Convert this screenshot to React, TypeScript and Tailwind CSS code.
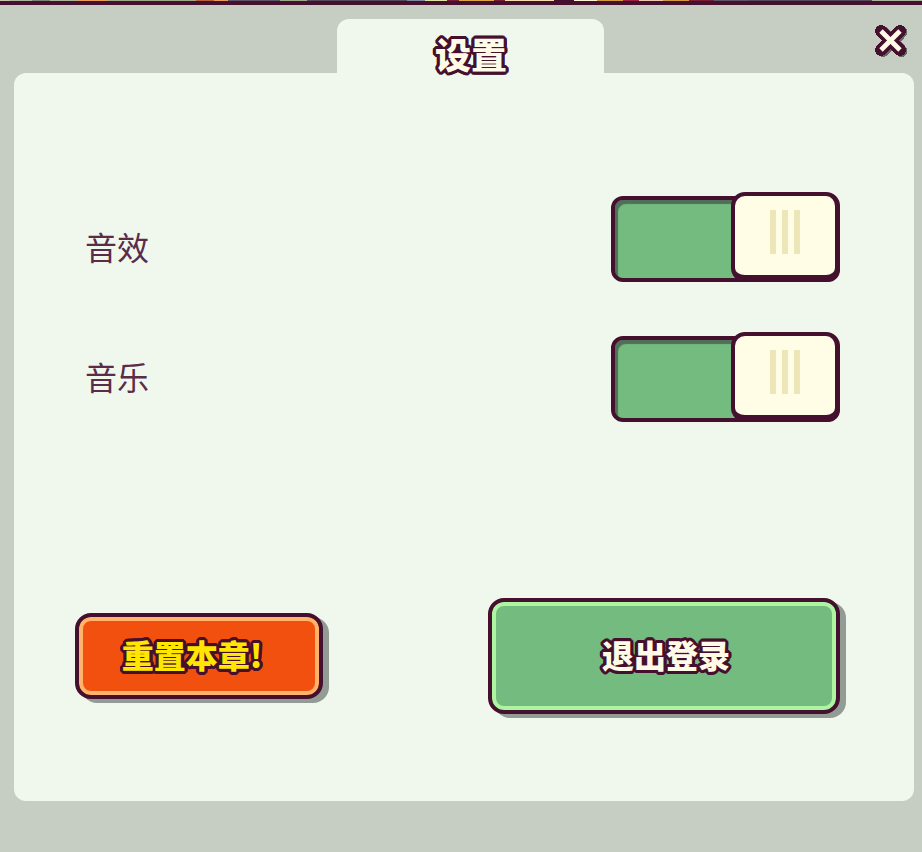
import { useState } from "react";

// Rounded outline drawn as a ring of hard shadows behind the glyphs
const OUTLINE =
  "[text-shadow:3px_0_#44102e,-3px_0_#44102e,0_3px_#44102e,0_-3px_#44102e,2px_2px_#44102e,-2px_2px_#44102e,2px_-2px_#44102e,-2px_-2px_#44102e,3px_1px_#44102e,-3px_1px_#44102e,3px_-1px_#44102e,-3px_-1px_#44102e,1px_3px_#44102e,-1px_3px_#44102e,1px_-3px_#44102e,-1px_-3px_#44102e,1px_1px_#44102e,-1px_-1px_#44102e]";

// Slivers of the game scene that stay visible above the dialog
const SCENE = [
  { grow: 10, color: "bg-[#c9c7b0]" },
  { grow: 22, color: "bg-[#aab59b]" },
  { grow: 18, color: "bg-[#7c8575]" },
  { grow: 27, color: "bg-[#aab59b]" },
  { grow: 31, color: "bg-[#ee9c5c]" },
  { grow: 88, color: "bg-[#9dab8c]" },
  { grow: 18, color: "bg-[#b8603c]" },
  { grow: 14, color: "bg-[#ee9c5c]" },
  { grow: 52, color: "bg-[#5d5668]" },
  { grow: 27, color: "bg-[#9dab8c]" },
  { grow: 100, color: "bg-[#564b5c]" },
  { grow: 18, color: "bg-[#8187a0]" },
  { grow: 22, color: "bg-[#dfe4a4]" },
  { grow: 12, color: "bg-[#7a1f35]" },
  { grow: 35, color: "bg-[#dba845]" },
  { grow: 11, color: "bg-[#7a1f35]" },
  { grow: 49, color: "bg-[#f6dfae]" },
  { grow: 20, color: "bg-[#44102e]" },
  { grow: 23, color: "bg-[#fbf3da]" },
  { grow: 26, color: "bg-[#d39a3f]" },
  { grow: 16, color: "bg-[#9b2440]" },
  { grow: 24, color: "bg-[#efc8b2]" },
  { grow: 26, color: "bg-[#d39a3f]" },
  { grow: 25, color: "bg-[#7a1f35]" },
  { grow: 34, color: "bg-[#5d5668]" },
  { grow: 124, color: "bg-[#564b5c]" },
  { grow: 50, color: "bg-[#aab59b]" },
];

function CrossIcon() {
  return (
    <svg viewBox="0 0 33 33" className="size-[33px]" fill="none" aria-hidden="true">
      <g strokeLinecap="round" shapeRendering="crispEdges">
        <path d="M8 7 26.5 26M26.5 7 8 26" stroke="#626a62" strokeWidth="12" />
        <path d="M6 6 25 25M25 6 6 25" stroke="#44102e" strokeWidth="12" />
      </g>
      <path d="M6 6 25 25M25 6 6 25" stroke="#fffbe6" strokeWidth="4.8" />
    </svg>
  );
}

interface ToggleProps {
  id: string;
  checked: boolean;
  onChange: (checked: boolean) => void;
}

function Toggle({ id, checked, onChange }: ToggleProps) {
  return (
    <div className="relative grid h-[90px] w-[229px]">
      <input
        id={id}
        type="checkbox"
        role="switch"
        checked={checked}
        onChange={(e) => onChange(e.target.checked)}
        className="absolute inset-0 z-10 size-full cursor-pointer opacity-0"
      />
      <div
        className={`col-start-1 row-start-1 mt-1 rounded-xl border-4 border-[#44102e] shadow-[inset_3px_4px_1px_#4f6f58] ${
          checked ? "bg-[#74bb80]" : "bg-[#b9bfb5]"
        }`}
      />
      <div
        className={`col-start-1 row-start-1 flex w-[109px] items-start justify-center gap-1.5 rounded-[14px] border-4 border-r-[5px] border-b-[7px] border-[#44102e] bg-[#fffde6] pt-3.5 ${
          checked ? "justify-self-end" : "justify-self-start"
        }`}
      >
        <span className="h-11 w-1.5 bg-[#ede6b8]" />
        <span className="h-11 w-1.5 bg-[#ede6b8]" />
        <span className="h-11 w-1.5 bg-[#ede6b8]" />
      </div>
    </div>
  );
}

export default function App() {
  const [sound, setSound] = useState(true);
  const [music, setMusic] = useState(true);

  return (
    <main className="min-h-screen bg-[#c6cdc2] pb-12 font-['Noto_Sans_CJK_SC',sans-serif]">
      <div className="flex h-[5px] border-b-4 border-[#44102e]">
        {SCENE.map((part, i) => (
          <span key={i} className={part.color} style={{ flexGrow: part.grow }} />
        ))}
      </div>

      <div className="pr-2 pl-3.5">
        <header className="grid grid-cols-[1fr_auto_1fr] pt-3.5 pl-3">
          <h1
            className={`col-start-2 flex h-[54px] w-[267px] items-end justify-center rounded-t-xl bg-[#f0f8ee] pb-0.5 pl-0.5 text-4xl leading-9 font-black text-[#fffbe6] ${OUTLINE}`}
          >
            设置
          </h1>
          <button type="button" aria-label="关闭" className="mt-1.5 mr-1.5 cursor-pointer self-start justify-self-end">
            <CrossIcon />
          </button>
        </header>

        <section className="rounded-xl bg-[#f0f8ee] pt-[119px] pr-[74px] pb-[87px] pl-[61px]">
          <div className="flex justify-between">
            <div className="flex flex-col gap-[90px] pt-[34px] pl-2.5 text-[32px] leading-10 font-normal text-[#5a2c47]">
              <label htmlFor="sound">音效</label>
              <label htmlFor="music">音乐</label>
            </div>
            <div className="flex flex-col gap-[50px]">
              <Toggle id="sound" checked={sound} onChange={setSound} />
              <Toggle id="music" checked={music} onChange={setMusic} />
            </div>
          </div>

          <div className="mt-44 flex items-center justify-between">
            <button
              type="button"
              className={`h-[86px] w-[248px] cursor-pointer rounded-2xl border-4 border-[#44102e] bg-[#f1500f] pr-3.5 pb-1 text-[32px] leading-10 font-black text-[#ffe600] shadow-[inset_0_0_0_4px_#ffb36b,6px_4px_0_#929c95] ${OUTLINE}`}
            >
              重置本章!
            </button>
            <button
              type="button"
              className={`h-[116px] w-[352px] cursor-pointer rounded-2xl border-4 border-[#44102e] bg-[#74bb80] pb-1 pl-1 text-[32px] leading-10 font-black text-[#fffbe6] shadow-[inset_0_0_0_4px_#aef5a1,6px_4px_0_#929c95] ${OUTLINE}`}
            >
              退出登录
            </button>
          </div>
        </section>
      </div>
    </main>
  );
}
